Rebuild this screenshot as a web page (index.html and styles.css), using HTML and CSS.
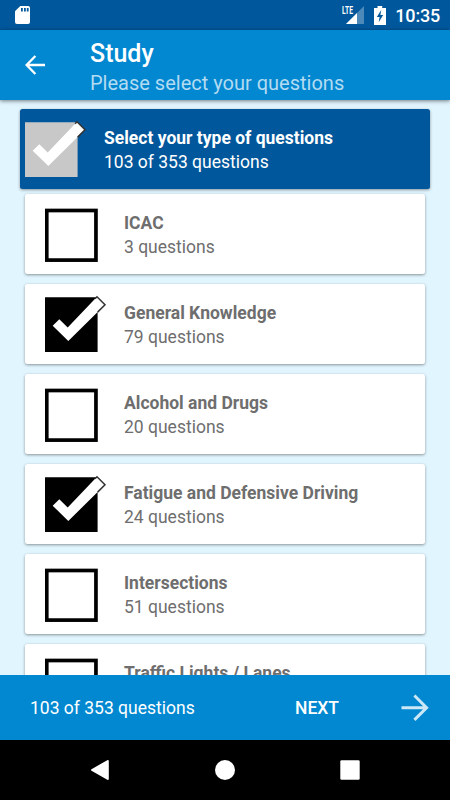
FILE: index.html
```html
<!DOCTYPE html>
<html lang="en">
<head>
  <meta charset="UTF-8">
  <title>Study</title>
  <meta name="viewport" content="width=device-width, initial-scale=1.0">
  <link rel="stylesheet" href="styles.css">
</head>
<body>

<svg class="defs" width="0" height="0">
  <symbol id="box-off" viewBox="0 0 64 64">
    <rect x="1.75" y="8.5" width="49.2" height="49.6" fill="#fff" stroke="#000" stroke-width="3.7"/>
  </symbol>
  <symbol id="box-on" viewBox="0 0 64 64">
    <path d="M0 5.2h52.6V60H0z" fill="currentColor"/>
    <path d="M7.7 33.7l6.6-6.5 8.4 8.3L52 4.7l8 8L23.3 49z" fill="#fff"/>
    <path class="tip" d="M50 6.8l2-2.1 8 8-7.4 7.4" fill="none"/>
  </symbol>
</svg>

<div class="status">
  <svg class="sd" width="16" height="20" viewBox="0 0 16 20">
    <path d="M5.3 1H13q2 0 2 2v14q0 2-2 2H2q-2 0-2-2V6.3z" fill="#fff"/>
    <path d="M6 3h1.8v3.5H6zM9 3h1.8v3.5H9zM11.8 3h1.8v3.5h-1.8z" fill="#01579b"/>
  </svg>
  <div class="status-right">
    <span class="lte">LTE</span>
    <svg class="signal" width="18" height="18" viewBox="0 0 18 18">
      <path d="M18 0v18H0z" fill="#4d89b9"/>
      <path d="M11 7v11H0z" fill="#fff"/>
    </svg>
    <svg class="battery" width="12" height="19" viewBox="0 0 12 19">
      <path d="M3.5 0h4.7v2H12v17H0V2h3.5z" fill="#fff"/>
      <path d="M7.2 4L2.8 11h2.8L4.7 16.2 9.2 9H6.4z" fill="#01579b"/>
    </svg>
    <span class="clock">10:35</span>
  </div>
</div>

<header>
  <svg class="back" width="20" height="20" viewBox="0 0 20 20">
    <path d="M20 10H1.8M10.4 1L1.6 10l8.8 9" fill="none" stroke="#fff" stroke-width="2.3"/>
  </svg>
  <div>
    <h1>Study</h1>
    <p>Please select your questions</p>
  </div>
</header>

<main>
  <div class="card all">
    <svg class="check"><use href="#box-on"/></svg>
    <div><h2>Select your type of questions</h2><p>103 of 353 questions</p></div>
  </div>
  <div class="card">
    <svg class="check"><use href="#box-off"/></svg>
    <div><h2>ICAC</h2><p>3 questions</p></div>
  </div>
  <div class="card">
    <svg class="check"><use href="#box-on"/></svg>
    <div><h2>General Knowledge</h2><p>79 questions</p></div>
  </div>
  <div class="card">
    <svg class="check"><use href="#box-off"/></svg>
    <div><h2>Alcohol and Drugs</h2><p>20 questions</p></div>
  </div>
  <div class="card">
    <svg class="check"><use href="#box-on"/></svg>
    <div><h2>Fatigue and Defensive Driving</h2><p>24 questions</p></div>
  </div>
  <div class="card">
    <svg class="check"><use href="#box-off"/></svg>
    <div><h2>Intersections</h2><p>51 questions</p></div>
  </div>
  <div class="card">
    <svg class="check"><use href="#box-off"/></svg>
    <div><h2>Traffic Lights / Lanes</h2></div>
  </div>
</main>

<footer>
  <span class="count">103 of 353 questions</span>
  <span class="next">NEXT</span>
  <svg width="28" height="28" viewBox="0 0 28 28">
    <path d="M.5 13.7h25M13.4 1.5l12.2 12.2L13.4 25.9" fill="none" stroke="#cce7f6" stroke-width="3"/>
  </svg>
</footer>

<nav>
  <svg width="18" height="20" viewBox="0 0 18 20"><path d="M16.8 1v18L1 10z" fill="#fff" stroke="#fff" stroke-width="2" stroke-linejoin="round"/></svg>
  <svg width="20" height="20" viewBox="0 0 20 20"><circle cx="10" cy="10" r="10" fill="#fff"/></svg>
  <svg width="20" height="20" viewBox="0 0 20 20"><rect x=".3" y=".3" width="19.4" height="19.4" rx="1.3" fill="#fff"/></svg>
</nav>

</body>
</html>
```
FILE: styles.css
```css
* {
  box-sizing: border-box;
}
body {
  display: flex;
  flex-direction: column;
  height: 800px;
  margin: 0;
  overflow: hidden;
  font-family: Roboto, sans-serif;
  background: #e1f5fe;
}
h1, h2, p {
  margin: 0;
  white-space: nowrap;
}
svg {
  display: block;
  flex: none;
}
.defs {
  position: absolute;
}
.status {
  display: flex;
  justify-content: space-between;
  height: 30px;
  padding: 5px 10px 0 15px;
  background: #01579b;
  color: #fff;
}
.status-right {
  display: flex;
}
.lte {
  font-size: 10.5px;
  line-height: 12px;
  font-weight: 700;
  transform: scaleX(.64);
  transform-origin: right;
}
.signal {
  margin: 1px 10px 0 -7px;
}
.battery {
  margin: 1px 9px 0 0;
}
.clock {
  font-size: 18px;
  line-height: 22px;
  font-weight: 500;
  letter-spacing: -.2px;
}
header {
  display: flex;
  height: 70px;
  padding: 7px 0 0 25px;
  background: #0288d1;
  color: #fff;
  box-shadow: 0 1px 4px rgba(0, 0, 0, .5);
  z-index: 1;
}
.back {
  margin: 18px 45px 0 0;
}
header h1 {
  padding-top: 1px;
  font-size: 25px;
  line-height: 31px;
  font-weight: 500;
}
header p {
  font-size: 20px;
  line-height: 28px;
  color: #b3dbf1;
}
main {
  flex: 1;
  min-height: 0;
  overflow: hidden;
  padding: 9px 25px 0;
}
.card {
  display: flex;
  height: 80px;
  margin-bottom: 10px;
  padding: 8px 0 0 20px;
  border-radius: 2.5px;
  background: #fff;
  color: #000;
  box-shadow: 0 1px 3px rgba(0, 0, 0, .4);
}
.card.all {
  height: 79.5px;
  margin: 0 -5px 5.5px;
  padding-left: 5px;
  background: #01579b;
  color: #c8c8c8;
}
.check {
  width: 64px;
  height: 64px;
  margin-right: 15px;
}
.tip {
  stroke: #333;
  stroke-width: 1.5;
}
.card h2 {
  margin-top: 9px;
  font-size: 17.5px;
  line-height: 24px;
  font-weight: 700;
  color: #6e6e6e;
}
.card p {
  font-size: 17.5px;
  line-height: 24px;
  color: #6e6e6e;
}
.card.all h2, .card.all p {
  color: #fff;
}
footer {
  display: flex;
  align-items: center;
  height: 65px;
  padding: 0 21px 0 30px;
  background: #0288d1;
  color: #fff;
  font-size: 17.5px;
}
.count {
  width: 265px;
}
.next {
  width: 106px;
  font-weight: 500;
}
nav {
  display: flex;
  justify-content: space-between;
  align-items: center;
  height: 60px;
  padding: 0 90px 0 91px;
  background: #000;
}
```
